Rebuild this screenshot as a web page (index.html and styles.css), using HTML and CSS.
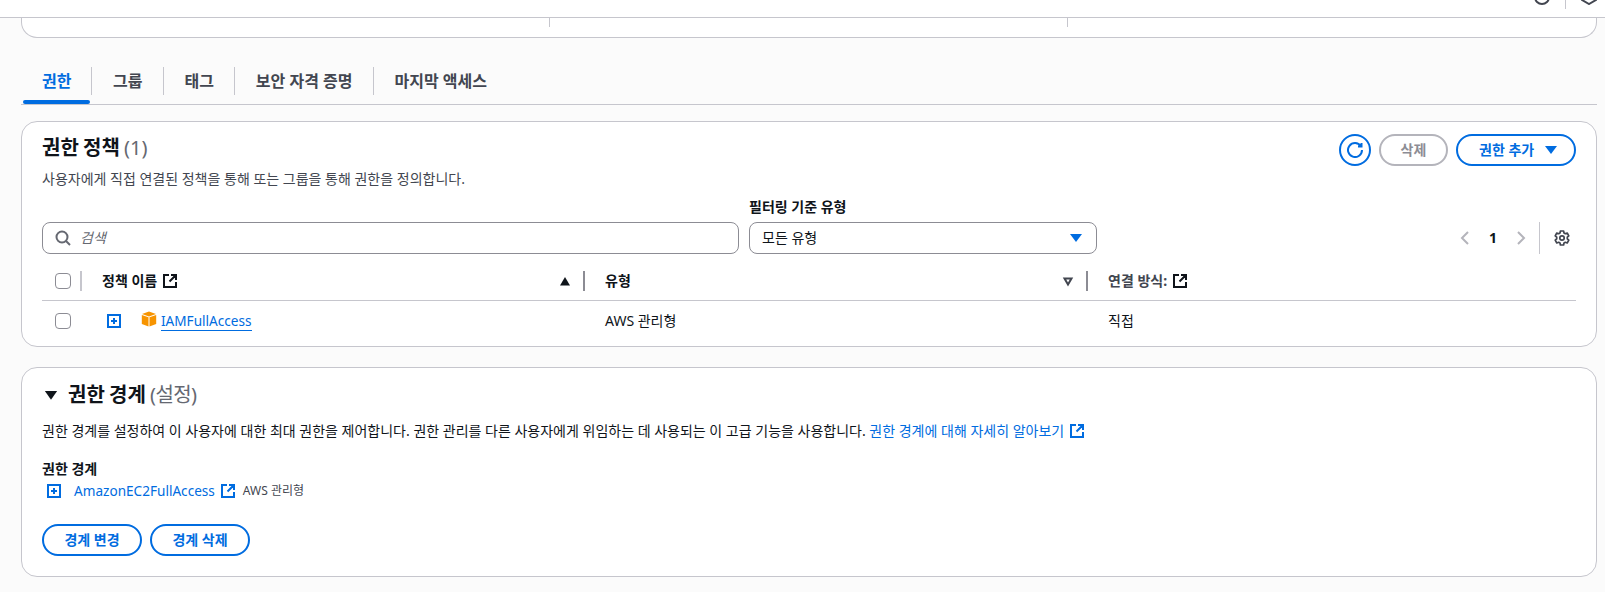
FILE: index.html
```html
<!DOCTYPE html>
<html lang="ko">
<head>
<meta charset="utf-8">
<title>IAM 사용자</title>
<link rel="stylesheet" href="styles.css">
</head>
<body>
<svg class="sprite" width="0" height="0" aria-hidden="true">
  <symbol id="ext" viewBox="0 0 14 14"><path d="M6 1H1v12h12V8M8 1h5v5M13 1 6.500 7.500" fill="none" stroke="currentColor" stroke-width="2"/></symbol>
  <symbol id="plus" viewBox="0 0 14 14"><path d="M1 1h12v12H1z" fill="none" stroke="currentColor" stroke-width="2"/><path d="M7 4v6M4 7h6" fill="none" stroke="currentColor" stroke-width="2"/></symbol>
</svg>
<header class="topbar">
  <svg class="top-icon" viewBox="0 0 16 16"><circle cx="8" cy="8" r="7" fill="none" stroke="currentColor" stroke-width="2"/><path d="M8 10v1" stroke="currentColor" stroke-width="2"/></svg>
  <span class="top-sep"></span>
  <svg class="top-icon" viewBox="0 0 16 16"><path d="M8 1 15 5v6l-7 4-7-4V5z" fill="none" stroke="currentColor" stroke-width="2"/></svg>
</header>
<main class="page">
  <section class="summary">
    <div class="summary-col"></div>
    <div class="summary-col"></div>
    <div class="summary-col"></div>
  </section>

  <nav class="tabs">
    <a class="tab tab-active">권한</a>
    <a class="tab">그룹</a>
    <a class="tab">태그</a>
    <a class="tab">보안 자격 증명</a>
    <a class="tab tab-last">마지막 액세스</a>
  </nav>

  <section class="card card-policies">
    <div class="card-head">
      <div class="head-text">
        <h2 class="title">권한 정책 <span class="count">(1)</span></h2>
        <p class="subtitle">사용자에게 직접 연결된 정책을 통해 또는 그룹을 통해 권한을 정의합니다.</p>
      </div>
      <div class="actions">
        <button class="btn-icon" aria-label="새로 고침">
          <svg viewBox="0 0 16 16" width="16" height="16"><path d="M15 8a7 7 0 1 1-1.200-3.900M14.500 1v3.500H11" fill="none" stroke="currentColor" stroke-width="2"/></svg>
        </button>
        <button class="btn btn-disabled btn-delete">삭제</button>
        <button class="btn btn-add">권한 추가 <svg class="caret" viewBox="0 0 16 16"><path d="M2 4h12L8 12z" fill="currentColor"/></svg></button>
      </div>
    </div>

    <div class="filters">
      <div class="search">
        <svg class="search-icon" viewBox="0 0 16 16"><circle cx="7" cy="7" r="5.500" fill="none" stroke="currentColor" stroke-width="2"/><path d="M11 11l4 4" stroke="currentColor" stroke-width="2"/></svg>
        <span class="placeholder">검색</span>
      </div>
      <div class="filter-field">
        <label class="filter-label">필터링 기준 유형</label>
        <div class="select">
          <span>모든 유형</span>
          <svg class="caret" viewBox="0 0 16 16"><path d="M2 4h12L8 12z" fill="currentColor"/></svg>
        </div>
      </div>
      <div class="pager">
        <svg class="chev" viewBox="0 0 16 16"><path d="M11 2 5 8l6 6" fill="none" stroke="currentColor" stroke-width="2"/></svg>
        <span class="page-num">1</span>
        <svg class="chev" viewBox="0 0 16 16"><path d="M5 2l6 6-6 6" fill="none" stroke="currentColor" stroke-width="2"/></svg>
        <span class="pager-sep"></span>
        <svg class="gear" viewBox="0 0 16 16"><path d="M6.400 1h3.200l.4 2 1.300.7 1.900-.7 1.600 2.800-1.500 1.300v1.800l1.500 1.300-1.600 2.800-1.900-.7-1.300.7-.4 2H6.400l-.4-2-1.300-.7-1.900.7L1.200 10.200l1.500-1.300V7.100L1.200 5.800l1.600-2.800 1.900.7L6 3z" fill="none" stroke="currentColor" stroke-width="1.700" stroke-linejoin="round"/><circle cx="8" cy="8" r="2.200" fill="none" stroke="currentColor" stroke-width="1.700"/></svg>
      </div>
    </div>

    <div class="table">
      <div class="row row-head">
        <div class="cell cell-check"><span class="checkbox"></span></div>
        <div class="cell cell-th"><span class="th-label">정책 이름</span><svg class="ext-th"><use href="#ext"/></svg>
          <svg class="sort" viewBox="0 0 14 14"><path d="M2 11.500h10L7 3z" fill="currentColor"/></svg></div>
        <div class="cell cell-th"><span class="th-label">유형</span>
          <svg class="sort sort-muted" viewBox="0 0 14 14"><path d="M3.500 4.500h7L7 10.500z" fill="none" stroke="currentColor" stroke-width="2"/></svg></div>
        <div class="cell cell-th cell-last"><span class="th-label th-muted">연결 방식:</span><svg class="ext-th"><use href="#ext"/></svg></div>
      </div>
      <div class="row row-body">
        <div class="cell-body cell-check"><span class="checkbox"></span></div>
        <div class="cell-body cell-name">
          <svg class="plus"><use href="#plus"/></svg>
          <svg class="cube" viewBox="0 0 16 16"><path d="M8 .5 15 3 8 5.500 1 3z" fill="#f79400"/><path d="M.8 4 7.500 6.300V15.500L.8 13z" fill="#f79400"/><path d="M15.200 4 8.500 6.300V15.500L15.200 13z" fill="#f79400"/></svg>
          <a class="policy-link">IAMFullAccess</a>
        </div>
        <div class="cell-body cell-type">AWS 관리형</div>
        <div class="cell-body cell-attach">직접</div>
      </div>
    </div>
  </section>

  <section class="card card-boundary">
    <h2 class="title boundary-title">
      <svg class="expand" viewBox="0 0 16 16"><path d="M1 3.500h14L8 13.500z" fill="currentColor"/></svg>
      <span>권한 경계 <span class="count count-wide">(설정)</span></span>
    </h2>
    <p class="desc">권한 경계를 설정하여 이 사용자에 대한 최대 권한을 제어합니다. 권한 관리를 다른 사용자에게 위임하는 데 사용되는 이 고급 기능을 사용합니다. <a class="link">권한 경계에 대해 자세히 알아보기<svg class="ext-inline"><use href="#ext"/></svg></a></p>
    <div class="field-label">권한 경계</div>
    <div class="boundary-value">
      <svg class="plus"><use href="#plus"/></svg>
      <a class="link boundary-link">AmazonEC2FullAccess<svg class="ext-inline"><use href="#ext"/></svg></a>
      <span class="managed">AWS 관리형</span>
    </div>
    <div class="boundary-actions">
      <button class="btn btn-wide">경계 변경</button>
      <button class="btn btn-wide">경계 삭제</button>
    </div>
  </section>
</main>
</body>
</html>
```

FILE: styles.css
```css
* { box-sizing: border-box; }
html, body { margin: 0; padding: 0; }
body {
  width: 1605px;
  height: 592px;
  overflow: hidden;
  background: #fbfbfb;
  color: #0f141a;
  font-family: "Noto Sans", "Noto Sans CJK KR", sans-serif;
  font-size: 14px;
  line-height: 20px;
}
.sprite { display: block; }
.topbar {
  height: 18px;
  background: #fff;
  border-bottom: 1px solid #c6c6cd;
  display: flex;
  justify-content: flex-end;
  align-items: flex-start;
  overflow: hidden;
  color: #424650;
  padding-right: 8px;
}
.top-icon { width: 16px; height: 16px; margin-top: -11px; display: block; }
.top-sep { width: 1px; height: 9px; background: #c6c6cd; margin: 0 15px; }
.page { padding: 0 8px 0 21px; }
.summary {
  height: 20px;
  background: #fff;
  border: 1px solid #c6c6cd;
  border-top: 0;
  border-radius: 0 0 16px 16px;
  display: grid;
  grid-template-columns: 528px 518px 1fr;
}
.summary-col { height: 9px; border-right: 1px solid #c6c6cd; }
.summary-col:last-child { border-right: 0; }
.tabs {
  margin-top: 29px;
  height: 38px;
  border-bottom: 1px solid #c6c6cd;
  display: flex;
  align-items: flex-start;
}
.tab {
  position: relative;
  height: 28px;
  padding: 0 20.5px;
  border-right: 1px solid #c6c6cd;
  font-size: 16px;
  font-weight: 700;
  line-height: 28px;
  color: #424650;
}
.tab-last { border-right: 0; }
.tab-active { color: #006ce0; padding: 0 20px 0 21px; }
.tab-active::after {
  content: "";
  position: absolute;
  left: 2px;
  right: 1px;
  top: 33px;
  height: 4px;
  background: #006ce0;
  border-radius: 2px;
}
.card {
  background: #fff;
  border: 1px solid #c6c6cd;
  border-radius: 16px;
}
.card-policies { margin-top: 16px; height: 226px; padding: 12px 20px 0 20px; }
.card-boundary { margin-top: 20px; height: 210px; padding: 13px 20px 0 20px; }
.card-head { display: flex; justify-content: space-between; align-items: flex-start; }
.title { margin: 0; font-size: 20px; line-height: 28px; font-weight: 700; word-spacing: -1px; }
.count { font-weight: 400; color: #656871; }
.count-wide { letter-spacing: -0.6px; }
.subtitle { margin: 7px 0 0; font-size: 14px; line-height: 20px; color: #424650; }
.actions { display: flex; align-items: center; gap: 8px; }
button { font-family: inherit; }
.btn-icon {
  width: 32px;
  height: 32px;
  padding: 0;
  border: 2px solid #006ce0;
  border-radius: 50%;
  background: #fff;
  color: #006ce0;
  display: flex;
  align-items: center;
  justify-content: center;
}
.btn {
  height: 32px;
  padding: 0;
  border: 2px solid #006ce0;
  border-radius: 20px;
  background: #fff;
  color: #006ce0;
  font-size: 14px;
  font-weight: 700;
  line-height: 20px;
  display: inline-flex;
  align-items: center;
  justify-content: center;
}
.btn-disabled { border-color: #b4b4bb; color: #8c8c94; }
.btn-delete { width: 69px; }
.btn-add { width: 120px; justify-content: flex-start; padding-left: 21px; }
.btn-add .caret { margin-left: 9px; }
.caret { width: 16px; height: 16px; color: #006ce0; display: block; flex: none; }
.filters { display: flex; align-items: flex-end; margin-top: 8px; }
.search {
  width: 697px;
  height: 32px;
  border: 1px solid #8c8c94;
  border-radius: 8px;
  background: #fff;
  display: flex;
  align-items: center;
  padding-left: 12px;
}
.search-icon { width: 16px; height: 16px; color: #656871; margin-right: 9px; }
.placeholder { font-style: italic; color: #656871; font-size: 14px; }
.filter-field { margin-left: 10px; width: 348px; }
.filter-label { display: block; font-size: 14px; font-weight: 700; line-height: 20px; margin-bottom: 5px; }
.select {
  height: 32px;
  border: 1px solid #8c8c94;
  border-radius: 8px;
  background: #fff;
  padding: 0 12px;
  display: flex;
  align-items: center;
  justify-content: space-between;
  font-size: 14px;
  color: #0f141a;
}
.pager { margin-left: auto; height: 32px; display: flex; align-items: center; color: #b4b4bb; }
.chev { width: 16px; height: 16px; display: block; }
.page-num { width: 40px; text-align: center; font-size: 14px; font-weight: 700; color: #0f141a; }
.pager-sep { width: 1px; height: 32px; background: #c6c6cd; margin: 0 14px 0 10px; }
.gear { width: 16px; height: 16px; color: #424650; display: block; margin-right: 6px; }
.table { margin-top: 17px; }
.row { display: grid; grid-template-columns: 40px 503px 503px 1fr; }
.row-head { height: 30px; border-bottom: 1px solid #c6c6cd; align-items: start; }
.row-body { height: 40px; align-items: center; }
.cell { display: flex; align-items: center; height: 20px; border-right: 2px solid #c6c6cd; }
.cell-check { display: flex; justify-content: flex-start; padding-left: 13px; }
.cell-th { padding-left: 20px; font-size: 14px; font-weight: 700; border-right-color: #8c8c94; }
.cell-last { border-right: 0; }
.th-muted { color: #424650; }
.checkbox {
  width: 16px;
  height: 16px;
  border: 1px solid #8c8c94;
  border-radius: 4px;
  background: #fff;
  display: block;
}
.ext-th { width: 14px; height: 14px; margin-left: 6px; color: #0f141a; }
.sort { width: 14px; height: 14px; margin-left: auto; margin-right: 11px; color: #0f141a; }
.sort-muted { color: #424650; }
.cell-name { display: flex; align-items: center; padding-left: 25px; }
.plus { width: 14px; height: 14px; color: #006ce0; display: block; flex: none; }
.cube { width: 16px; height: 16px; margin-left: 20px; display: block; margin-top: -5px; }
.policy-link { margin-left: 4px; color: #006ce0; font-size: 13.6px; border-bottom: 1px solid #006ce0; line-height: 19px; }
.cell-type { padding-left: 20px; font-size: 14px; }
.cell-attach { padding-left: 20px; font-size: 14px; }
.boundary-title { display: flex; align-items: center; gap: 10px; }
.expand { width: 14px; height: 14px; margin-left: 2px; }
.desc { margin: 12px 0 0; font-size: 14px; line-height: 20px; }
.link { color: #006ce0; }
.ext-inline { width: 14px; height: 14px; margin-left: 6px; vertical-align: -2px; color: #006ce0; }
.field-label { margin-top: 18px; font-size: 14px; font-weight: 700; line-height: 20px; }
.boundary-value { display: flex; align-items: center; height: 20px; margin-top: 2px; }
.boundary-value .plus { margin-left: 5px; }
.boundary-link { margin-left: 13px; font-size: 13.6px; }
.managed { margin-left: 8px; font-size: 12px; color: #424650; }
.boundary-actions { display: flex; gap: 8px; margin-top: 23px; }
.btn-wide { width: 100px; }
```
